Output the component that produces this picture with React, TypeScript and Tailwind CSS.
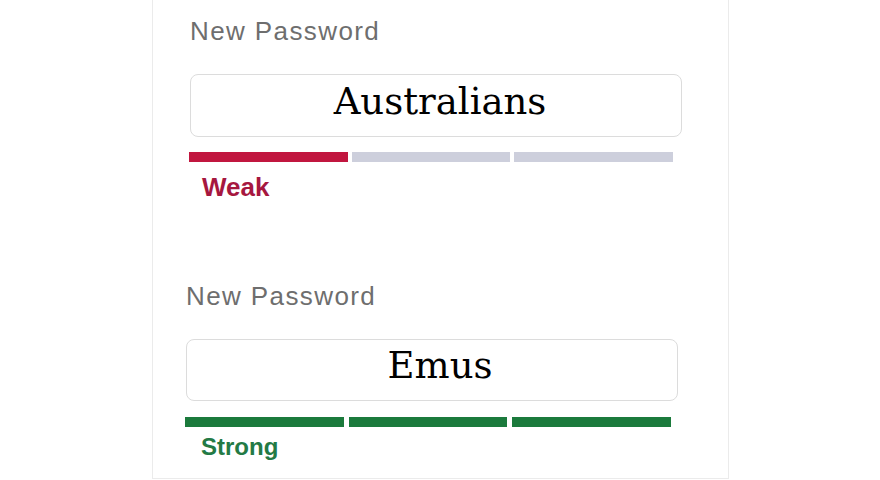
const labelFont = { fontFamily: '"Liberation Sans", Arial, sans-serif' };

function Bars({ color, filled }: { color: string; filled: number }) {
  return (
    <>
      {[0, 1, 2].map((i) => (
        <div
          key={i}
          className={`h-[10px] flex-1 ${i < filled ? color : "bg-[#cdcfdc]"}`}
        />
      ))}
    </>
  );
}

export default function App() {
  return (
    <div className="h-[480px] w-[880px] overflow-hidden bg-white">
      <div className="ml-[152px] h-[479px] w-[577px] border border-t-0 border-[#ebebeb]">
        {/* weak */}
        <div className="pt-[15px]">
          <div
            className="ml-[37px] text-[26px] leading-[32px] tracking-[1.4px] text-[#6e6e6e]"
            style={labelFont}
          >
            New Password
          </div>
          <div className="ml-[37px] mt-[27px] flex h-[63px] w-[492px] items-center justify-center rounded-lg border border-[#dcdcdc] pb-[8px] pl-[8px]">
            <span className="font-['DejaVu_Serif',serif] text-[37px] text-black">
              Australians
            </span>
          </div>
          <div className="ml-[36px] mt-[15px] flex w-[484px] gap-[4px]">
            <Bars color="bg-[#c1163f]" filled={1} />
          </div>
          <div
            className="ml-[49px] mt-[11px] text-[26px] font-bold leading-[28px] text-[#a6173f]"
            style={labelFont}
          >
            Weak
          </div>
        </div>

        {/* strong */}
        <div className="pt-[79px]">
          <div
            className="ml-[33px] text-[26px] leading-[32px] tracking-[1.4px] text-[#6e6e6e]"
            style={labelFont}
          >
            New Password
          </div>
          <div className="ml-[33px] mt-[27px] flex h-[62px] w-[492px] items-center justify-center rounded-lg border border-[#dcdcdc] pb-[8px] pl-[16px]">
            <span className="font-['DejaVu_Serif',serif] text-[37px] text-black">
              Emus
            </span>
          </div>
          <div className="ml-[32px] mt-[16px] flex w-[486px] gap-[5px]">
            <Bars color="bg-[#1b7a3c]" filled={3} />
          </div>
          <div
            className="ml-[48px] mt-[6px] text-[24px] font-bold leading-[28px] text-[#237a45]"
            style={labelFont}
          >
            Strong
          </div>
        </div>
      </div>
    </div>
  );
}
